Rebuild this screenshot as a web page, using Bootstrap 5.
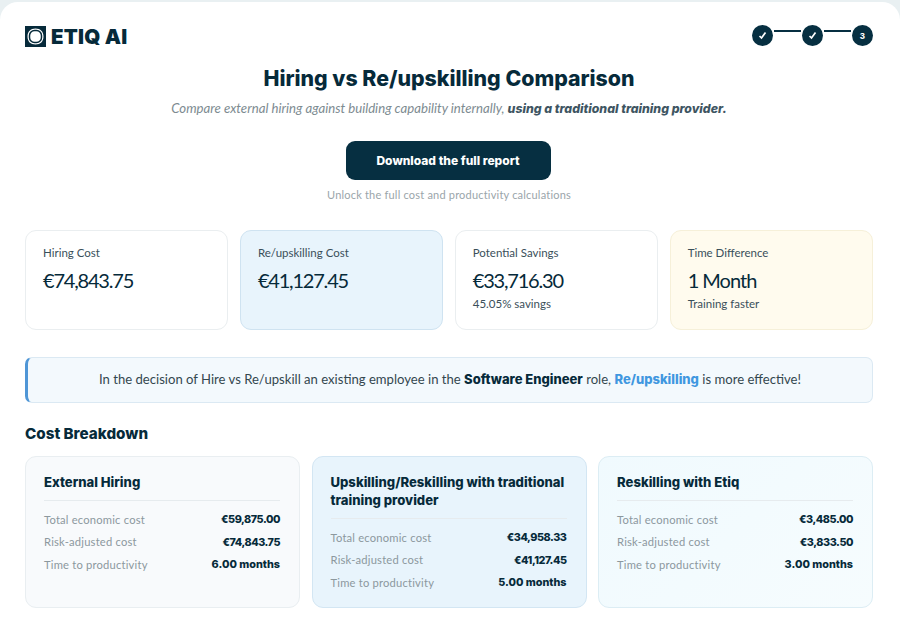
<!DOCTYPE html>
<html lang="en">
<head>
  <meta charset="UTF-8">
  <meta name="viewport" content="width=device-width, initial-scale=1.0">
  <title>Hiring vs Re/upskilling Comparison</title>
  <link href="https://cdn.jsdelivr.net/npm/bootstrap@5.3.3/dist/css/bootstrap.min.css" rel="stylesheet">
  <style>
    html, body {
      height: 617px;
      overflow: hidden;
    }

    body {
      background-color: #e9f0f2;
      font-family: "Lato", "Liberation Sans", sans-serif;
      color: #062a3a;
      padding-top: 2px;
    }

    .page-shell {
      background: #ffffff;
      border-radius: 18px 18px 0 0;
      height: 615px;
      padding: 23px 27px 0 25px;
    }

    .brand-mark {
      font-family: "Inter", sans-serif;
      font-size: 20.5px;
      font-weight: 900;
      line-height: 21px;
      letter-spacing: .2px;
      gap: 5px;
    }

    .brand-mark span {
      padding-top: 1px;
    }

    .step-dot {
      width: 21px;
      height: 21px;
      border-radius: 50%;
      background: #062f41;
      color: #fff;
      font-family: "Inter", sans-serif;
      font-size: 8px;
      font-weight: 800;
    }

    .step-line {
      width: 27px;
      height: 2px;
      margin: 0 1px 10px;
      background: #062f41;
    }

    .page-title {
      font-family: "Inter", sans-serif;
      font-size: 21.3px;
      font-weight: 800;
      line-height: 28px;
      margin: 17px 0 0;
    }

    .page-sub {
      font-size: 13.2px;
      font-style: italic;
      line-height: 18px;
      color: #7d8b91;
      margin: 7px 0 0;
    }

    .page-sub b {
      color: #3e5562;
      font-family: "Inter", sans-serif;
      font-size: 12.3px;
      font-weight: 800;
    }

    .report-btn {
      width: 205px;
      height: 39px;
      margin: 23px 2px 0 0;
      padding: 0;
      border: 0;
      border-radius: 9px;
      background: #062f41;
      color: #fff;
      font-family: "Inter", sans-serif;
      font-size: 12px;
      font-weight: 800;
    }

    .report-note {
      font-size: 11px;
      line-height: 15px;
      color: #9aa5aa;
      letter-spacing: .2px;
      margin: 7px 0 0;
    }

    .stat-row {
      display: grid;
      grid-template-columns: repeat(4, 1fr);
      gap: 11.5px;
      margin-top: 28px;
    }

    .stat-box {
      height: 100px;
      padding: 15px 17px;
      border: 1px solid #eaeef0;
      border-radius: 11px;
    }

    .stat-box.is-blue {
      background: #e8f4fc;
      border-color: #cfe3f1;
    }

    .stat-box.is-yellow {
      background: #fffbee;
      border-color: #f6f0d9;
    }

    .stat-label {
      font-size: 11.5px;
      line-height: 14px;
      color: #3a4f5a;
    }

    .stat-value {
      font-size: 20px;
      letter-spacing: -1.2px;
      line-height: 26px;
      margin-top: 7px;
    }

    .stat-value.is-time {
      letter-spacing: -1px;
    }

    .stat-foot {
      font-size: 11.5px;
      line-height: 14px;
      margin-top: 4px;
      color: #3a4f5a;
    }

    .verdict {
      height: 46px;
      margin-top: 27px;
      border: 1px solid #dbe9f3;
      border-left: 3px solid #4f96d6;
      border-radius: 7px;
      background: #f3f9fd;
      font-size: 13.1px;
      color: #33474f;
    }

    .verdict b {
      font-family: "Inter", sans-serif;
      font-size: 13px;
      font-weight: 800;
      color: #062a3a;
    }

    .verdict b.accent {
      color: #3f97e0;
    }

    .section-title {
      font-family: "Inter", sans-serif;
      font-size: 15.2px;
      font-weight: 800;
      line-height: 20px;
      margin: 21px 0 12px;
    }

    .cost-row {
      display: grid;
      grid-template-columns: repeat(3, 1fr);
      gap: 11.5px;
    }

    .cost-box {
      height: 152px;
      padding: 16px 19px 16px 18px;
      border: 1px solid #e9eef1;
      border-radius: 11px;
      background: #f8fafc;
    }

    .cost-box.is-blue {
      background: #e8f4fc;
      border-color: #d3e6f3;
    }

    .cost-box.is-sky {
      background: linear-gradient(135deg, #f0fafe, #f6fcfe);
      border-color: #dcedf4;
    }

    .cost-name {
      font-family: "Inter", sans-serif;
      font-size: 13.1px;
      font-weight: 800;
      line-height: 18px;
      padding-bottom: 9px;
      margin-bottom: 8px;
      border-bottom: 1px solid #e6ebee;
    }

    .cost-line {
      height: 22.5px;
      font-size: 11.2px;
      color: #8c989e;
      letter-spacing: .2px;
    }

    .cost-line b {
      font-family: "Inter", sans-serif;
      font-size: 10.8px;
      font-weight: 800;
      letter-spacing: 0;
      color: #062a3a;
    }

    .cost-line b.is-money {
      letter-spacing: -.45px;
    }
  </style>
</head>
<body>
  <div class="page-shell">
    <!-- Header -->
    <div class="d-flex justify-content-between align-items-start">
      <div class="d-flex align-items-center brand-mark">
        <svg width="21" height="21" viewBox="0 0 21 21">
          <path fill="#062a3a" fill-rule="evenodd" d="M0 0H21V21H0Z M10.5 2.5C5.5 2.5 2.5 5.5 2.5 10.5S5.5 18.5 10.5 18.5S18.5 15.5 18.5 10.5S15.5 2.5 10.5 2.5Z"/>
          <rect x="4.5" y="4.5" width="12" height="12" rx="5" fill="none" stroke="#062a3a" stroke-width="1.5"/>
        </svg>
        <span>ETIQ AI</span>
      </div>
      <div class="d-flex align-items-center">
        <div class="step-dot d-flex align-items-center justify-content-center">
          <svg width="9" height="9" viewBox="0 0 9 9"><path d="M1.5 5L3.5 7L7.5 1.5" fill="none" stroke="#fff" stroke-width="1.7"/></svg>
        </div>
        <div class="step-line"></div>
        <div class="step-dot d-flex align-items-center justify-content-center">
          <svg width="9" height="9" viewBox="0 0 9 9"><path d="M1.5 5L3.5 7L7.5 1.5" fill="none" stroke="#fff" stroke-width="1.7"/></svg>
        </div>
        <div class="step-line"></div>
        <div class="step-dot d-flex align-items-center justify-content-center">3</div>
      </div>
    </div>

    <!-- Intro -->
    <div class="text-center">
      <h1 class="page-title">Hiring vs Re/upskilling Comparison</h1>
      <p class="page-sub">Compare external hiring against building capability internally, <b>using a traditional training provider.</b></p>
      <button class="btn report-btn">Download the full report</button>
      <p class="report-note">Unlock the full cost and productivity calculations</p>
    </div>

    <!-- Stats -->
    <div class="stat-row">
      <div class="stat-box">
        <div class="stat-label">Hiring Cost</div>
        <div class="stat-value">€74,843.75</div>
      </div>
      <div class="stat-box is-blue">
        <div class="stat-label">Re/upskilling Cost</div>
        <div class="stat-value">€41,127.45</div>
      </div>
      <div class="stat-box">
        <div class="stat-label">Potential Savings</div>
        <div class="stat-value">€33,716.30</div>
        <div class="stat-foot">45.05% savings</div>
      </div>
      <div class="stat-box is-yellow">
        <div class="stat-label">Time Difference</div>
        <div class="stat-value is-time">1 Month</div>
        <div class="stat-foot">Training faster</div>
      </div>
    </div>

    <!-- Verdict -->
    <div class="verdict d-flex align-items-center justify-content-center">
      <span>In the decision of Hire vs Re/upskill an existing employee in the <b>Software Engineer</b> role, <b class="accent">Re/upskilling</b> is more effective!</span>
    </div>

    <!-- Breakdown -->
    <h2 class="section-title">Cost Breakdown</h2>
    <div class="cost-row">
      <div class="cost-box">
        <div class="cost-name">External Hiring</div>
        <div class="cost-line d-flex justify-content-between align-items-center"><span>Total economic cost</span><b class="is-money">€59,875.00</b></div>
        <div class="cost-line d-flex justify-content-between align-items-center"><span>Risk-adjusted cost</span><b class="is-money">€74,843.75</b></div>
        <div class="cost-line d-flex justify-content-between align-items-center"><span>Time to productivity</span><b>6.00 months</b></div>
      </div>
      <div class="cost-box is-blue">
        <div class="cost-name">Upskilling/Reskilling with traditional training provider</div>
        <div class="cost-line d-flex justify-content-between align-items-center"><span>Total economic cost</span><b class="is-money">€34,958.33</b></div>
        <div class="cost-line d-flex justify-content-between align-items-center"><span>Risk-adjusted cost</span><b class="is-money">€41,127.45</b></div>
        <div class="cost-line d-flex justify-content-between align-items-center"><span>Time to productivity</span><b>5.00 months</b></div>
      </div>
      <div class="cost-box is-sky">
        <div class="cost-name">Reskilling with Etiq</div>
        <div class="cost-line d-flex justify-content-between align-items-center"><span>Total economic cost</span><b class="is-money">€3,485.00</b></div>
        <div class="cost-line d-flex justify-content-between align-items-center"><span>Risk-adjusted cost</span><b class="is-money">€3,833.50</b></div>
        <div class="cost-line d-flex justify-content-between align-items-center"><span>Time to productivity</span><b>3.00 months</b></div>
      </div>
    </div>
  </div>

  <script src="https://cdn.jsdelivr.net/npm/bootstrap@5.3.3/dist/js/bootstrap.bundle.min.js"></script>
</body>
</html>
